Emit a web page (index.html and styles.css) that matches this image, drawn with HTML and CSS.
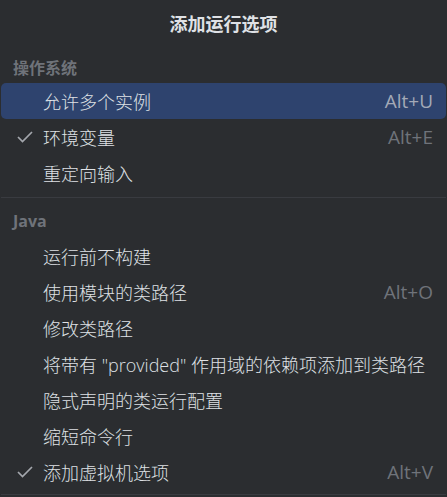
FILE: index.html
```html
<!DOCTYPE html>
<html lang="zh">
<head>
<meta charset="utf-8">
<link rel="stylesheet" href="styles.css">
</head>
<body>
<div class="popup">
  <div class="title">添加运行选项</div>
  <div class="group-header first">操作系统</div>
  <div class="item selected"><span class="check"></span><span class="label">允许多个实例</span><span class="key">Alt+U</span></div>
  <div class="item"><span class="check"><svg width="16" height="12" viewBox="0 0 16 12"><polyline points="1,6 5.5,10.5 15,1" fill="none" stroke="#a4a7ad" stroke-width="1.7"/></svg></span><span class="label">环境变量</span><span class="key">Alt+E</span></div>
  <div class="item"><span class="check"></span><span class="label">重定向输入</span></div>
  <div class="sep"></div>
  <div class="group-header">Java</div>
  <div class="item"><span class="check"></span><span class="label">运行前不构建</span></div>
  <div class="item"><span class="check"></span><span class="label">使用模块的类路径</span><span class="key">Alt+O</span></div>
  <div class="item"><span class="check"></span><span class="label">修改类路径</span></div>
  <div class="item"><span class="check"></span><span class="label">将带有 "provided" 作用域的依赖项添加到类路径</span></div>
  <div class="item"><span class="check"></span><span class="label">隐式声明的类运行配置</span></div>
  <div class="item"><span class="check"></span><span class="label">缩短命令行</span></div>
  <div class="item"><span class="check"><svg width="16" height="12" viewBox="0 0 16 12"><polyline points="1,6 5.5,10.5 15,1" fill="none" stroke="#a4a7ad" stroke-width="1.7"/></svg></span><span class="label">添加虚拟机选项</span><span class="key">Alt+V</span></div>
  <div class="sep bottom"></div>
</div>
</body>
</html>
```
FILE: styles.css
```css
html, body {
  margin: 0;
  padding: 0;
  background: #2b2d30;
}
body {
  font-family: "Open Sans", "Noto Sans CJK SC", sans-serif;
  color: #dfe1e5;
  overflow: hidden;
}
.popup {
  display: flex;
  flex-direction: column;
  width: 447px;
}
.title {
  padding-top: 12px;
  height: 24px;
  line-height: 24px;
  text-align: center;
  font-size: 18px;
  font-weight: 700;
  color: #dfe1e5;
}
.group-header {
  height: 20px;
  line-height: 20px;
  padding-left: 13px;
  font-size: 16px;
  font-weight: 700;
  color: #6f737a;
  margin-top: 13px;
  margin-bottom: 7px;
}
.group-header.first {
  margin-top: 22px;
  margin-bottom: 5px;
}
.item {
  display: flex;
  align-items: center;
  height: 36px;
  margin: 0 1px;
  border-radius: 5px;
  padding: 0 13px 0 16px;
  font-size: 18px;
  font-weight: 300;
}
.item.selected {
  background: #2e436e;
}
.check {
  width: 26px;
  display: flex;
  align-items: center;
}
.label {
  flex: 1;
  white-space: nowrap;
}
.key {
  color: #6f737a;
  font-size: 19px;
  font-weight: 400;
}
.selected .key {
  color: #a3a9b7;
}
.sep {
  height: 1px;
  background: #393b40;
  margin: 6px 1px 0;
}
.sep.bottom {
  margin-top: 4px;
}
```
